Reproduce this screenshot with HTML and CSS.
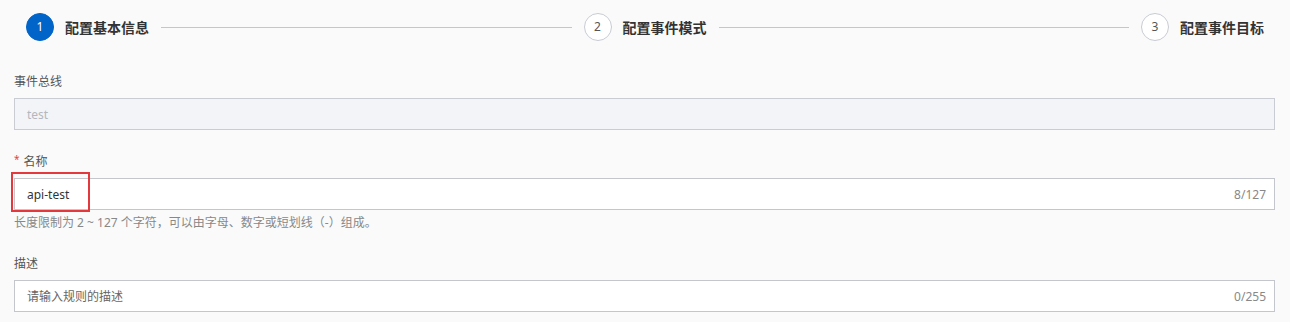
FILE: index.html
```html
<!DOCTYPE html>
<html lang="zh-CN">
<head>
    <meta charset="UTF-8">
    <title>创建事件规则</title>
    <link rel="stylesheet" href="styles.css">
</head>
<body>
<!--步骤条-->
<div class="steps">
    <div class="step on">
        <span class="num">1</span>
        <span class="title">配置基本信息</span>
    </div>
    <div class="line"></div>
    <div class="step">
        <span class="num">2</span>
        <span class="title">配置事件模式</span>
    </div>
    <div class="line"></div>
    <div class="step">
        <span class="num">3</span>
        <span class="title">配置事件目标</span>
    </div>
</div>
<!--表单-->
<div class="form">
    <div class="item">
        <div class="label">事件总线</div>
        <div class="input disabled"><span class="val">test</span></div>
    </div>
    <div class="item">
        <div class="label"><i class="req">*</i>名称</div>
        <div class="input mark">
            <span class="val">api-test</span>
            <span class="count">8/127</span>
            <div class="highlight"></div>
        </div>
        <div class="help">长度限制为 2 ~ 127 个字符，可以由字母、数字或短划线（-）组成。</div>
    </div>
    <div class="item">
        <div class="label">描述</div>
        <div class="input"><span class="ph">请输入规则的描述</span><span class="count">0/255</span></div>
    </div>
</div>
</body>
</html>
```

FILE: styles.css
```css
*{margin:0;padding:0;}
body{
    background:#fafafa;
    font-family:"Noto Sans","Noto Sans CJK SC",sans-serif;
    font-size:12px;
    color:#333;
}
i{font-style:normal;}
/*步骤条*/
.steps{
    display:flex;
    align-items:center;
    height:28px;
    padding:13px 26px 0 26px;
}
.step{
    display:flex;
    align-items:center;
}
.step .num{
    width:26px;
    height:26px;
    line-height:26px;
    text-align:center;
    border:1px solid #c8ccd3;
    border-radius:50%;
    background:#fff;
    color:#555;
    font-size:12px;
}
.step.on .num{
    border-color:#0064c8;
    background:#0064c8;
    color:#fff;
}
.step .title{
    margin-left:11px;
    font-size:14px;
    font-weight:bold;
    color:#333;
    white-space:nowrap;
}
.steps .line{
    flex:1;
    height:1px;
    margin:0 12px;
    background:#c3c6ce;
}
/*表单*/
.form{
    padding:32px 15px 0 14px;
}
.item{
    margin-bottom:23px;
}
.label{
    line-height:18px;
    margin-bottom:7px;
    color:#555;
}
.label .req{
    color:#e0463c;
    font-size:10px;
    margin-right:4px;
    position:relative;
    top:-3px;
}
.input{
    position:relative;
    display:flex;
    align-items:center;
    justify-content:space-between;
    height:30px;
    padding:0 8px 0 12px;
    border:1px solid #c3c6cd;
    background:#fff;
    font-size:12px;
}
.input.disabled{
    background:#f3f4f7;
    border-color:#c9ccd3;
}
.input.disabled .val{color:#b3b7be;}
.input .val{color:#333;}
.input .ph{color:#666;}
.input .count{color:#888;}
.highlight{
    position:absolute;
    left:-4px;
    top:-7px;
    width:75px;
    height:36px;
    border:2px solid #e4393c;
}
.help{
    margin-top:4px;
    line-height:18px;
    color:#888;
}
.item:nth-child(2){
    margin-bottom:23px;
}
```
